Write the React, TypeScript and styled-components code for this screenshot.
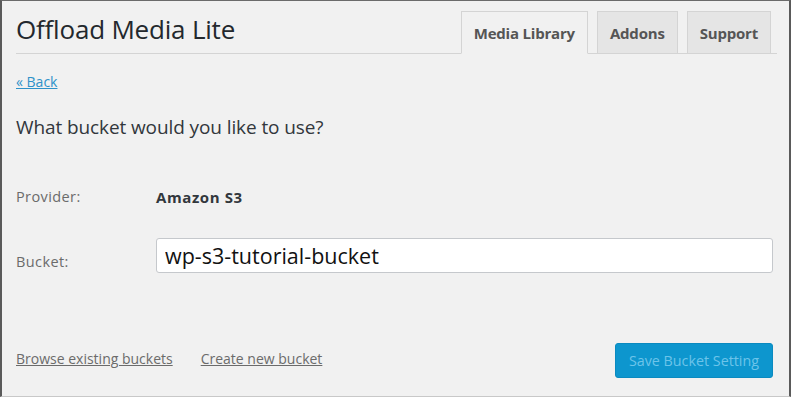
import styled, { createGlobalStyle } from "styled-components";

const GlobalStyle = createGlobalStyle`
  html, body {
    margin: 0;
    padding: 0;
    background: #f1f1f1;
  }
  * {
    box-sizing: border-box;
  }
`;

const Frame = styled.div`
  width: 791px;
  height: 397px;
  background: #f1f1f1;
  border-top: 1px solid #6b6b6b;
  border-left: 2px solid #5a5a5a;
  border-right: 2px solid #5a5a5a;
  border-bottom: 1px solid #c8c8c8;
  font-family: "Open Sans", "Noto Sans", sans-serif;
  color: #23282d;
  display: flex;
  flex-direction: column;
`;

const Header = styled.div`
  display: flex;
  align-items: flex-end;
  justify-content: space-between;
  margin: 0 12px 0 14px;
  height: 53px;
  border-bottom: 1px solid #d4d4d4;
`;

const Title = styled.h1`
  margin: 0 0 6px 0;
  font-size: 26px;
  line-height: 36px;
  font-weight: 400;
  color: #23282d;
  letter-spacing: -0.2px;
`;

const Tabs = styled.nav`
  display: flex;
  gap: 9px;
  margin-right: 6px;
`;

const Tab = styled.div<{ $active?: boolean }>`
  height: ${(p) => (p.$active ? "43px" : "42px")};
  margin-bottom: ${(p) => (p.$active ? "-1px" : "0")};
  padding: 0 12px;
  display: flex;
  align-items: center;
  border: 1px solid #d4d4d4;
  border-bottom: ${(p) => (p.$active ? "1px solid #f1f1f1" : "none")};
  background: ${(p) => (p.$active ? "#f1f1f1" : "#e5e5e5")};
  font-size: 15px;
  font-weight: 700;
  color: #555;
  letter-spacing: -0.2px;
`;

const Body = styled.div`
  flex: 1;
  display: flex;
  flex-direction: column;
  padding: 19px 16px 18px 14px;
`;

const BackLink = styled.a`
  display: block;
  font-size: 14px;
  line-height: 18px;
  color: #2e92c9;
  text-decoration: underline;
  width: fit-content;
`;

const Question = styled.h2`
  margin: 23px 0 0 0;
  font-size: 19px;
  line-height: 26px;
  font-weight: 400;
  color: #32373c;
  letter-spacing: -0.1px;
`;

const Row = styled.div<{ $top: number }>`
  display: grid;
  grid-template-columns: 140px 1fr;
  align-items: center;
  margin-top: ${(p) => p.$top}px;
`;

const Label = styled.span<{ $shift?: number }>`
  font-size: 14.5px;
  line-height: 20px;
  color: #6b6b6b;
  letter-spacing: 0.4px;
  padding-top: ${(p) => (p.$shift ?? 0) * 2}px;
`;

const Value = styled.span`
  font-size: 15px;
  line-height: 20px;
  font-weight: 700;
  color: #32373c;
  letter-spacing: 0.6px;
`;

const BucketInput = styled.input`
  height: 35px;
  width: 100%;
  border: 1px solid #c5c8cc;
  border-radius: 3px;
  background: #fff;
  padding: 0 8px;
  font-family: "Open Sans", "Noto Sans", sans-serif;
  font-size: 21.5px;
  color: #111;
  outline: none;
`;

const Footer = styled.div`
  margin-top: auto;
  display: flex;
  align-items: center;
  justify-content: space-between;
`;

const FooterLinks = styled.div`
  display: flex;
  gap: 28px;
  padding-bottom: 4px;
`;

const GreyLink = styled.a`
  font-size: 14px;
  color: #6b6b6b;
  text-decoration: underline;
`;

const SaveButton = styled.button`
  height: 35px;
  padding: 0 13px;
  background: #0d96ce;
  border: 1px solid #0a8ac0;
  border-radius: 3px;
  font-family: "Open Sans", "Noto Sans", sans-serif;
  font-size: 14.3px;
  color: #6cc4ea;
`;

export default function App() {
  return (
    <>
      <GlobalStyle />
      <Frame>
        <Header>
          <Title>Offload Media Lite</Title>
          <Tabs>
            <Tab $active>Media Library</Tab>
            <Tab>Addons</Tab>
            <Tab>Support</Tab>
          </Tabs>
        </Header>
        <Body>
          <BackLink href="#">« Back</BackLink>
          <Question>What bucket would you like to use?</Question>
          <Row $top={47}>
            <Label>Provider:</Label>
            <Value>Amazon S3</Value>
          </Row>
          <Row $top={31}>
            <Label $shift={6}>Bucket:</Label>
            <BucketInput defaultValue="wp-s3-tutorial-bucket" />
          </Row>
          <Footer>
            <FooterLinks>
              <GreyLink href="#">Browse existing buckets</GreyLink>
              <GreyLink href="#">Create new bucket</GreyLink>
            </FooterLinks>
            <SaveButton disabled>Save Bucket Setting</SaveButton>
          </Footer>
        </Body>
      </Frame>
    </>
  );
}
